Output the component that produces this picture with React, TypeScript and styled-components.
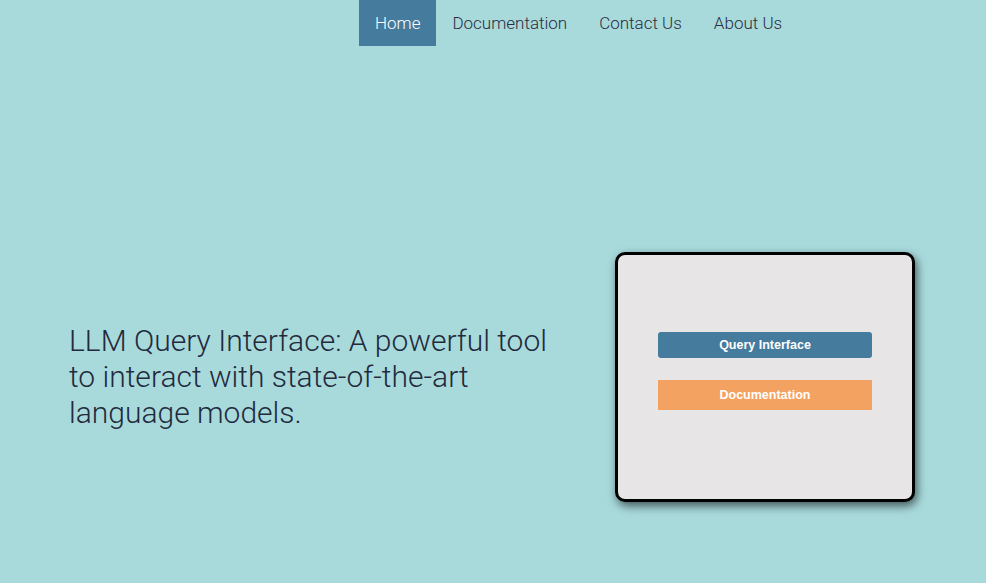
import React from "react";
import styled, { createGlobalStyle } from "styled-components";

const Global = createGlobalStyle`
  html, body { margin: 0; padding: 0; }
  body {
    background: #a8dadc;
    font-family: Roboto, "Liberation Sans", sans-serif;
    font-weight: 300;
    color: #2b2d42;
  }
`;

const Page = styled.div`
  min-height: 583px;
  display: flex;
  flex-direction: column;
`;

const Nav = styled.nav`
  display: flex;
  height: 46px;
  padding-left: 359px;
`;

const NavLink = styled.a<{ $active?: boolean }>`
  display: flex;
  align-items: center;
  padding: 0 16px;
  font-size: 17px;
  font-weight: 300;
  text-decoration: none;
  color: ${(p) => (p.$active ? "#ffffff" : "#2b2d42")};
  background: ${(p) => (p.$active ? "#457b9d" : "transparent")};
`;

const Hero = styled.section`
  display: flex;
  align-items: center;
  justify-content: space-between;
  padding: 206px 71px 0 69px;
`;

const Headline = styled.h1`
  margin: 0;
  width: 490px;
  font-size: 30px;
  line-height: 36px;
  font-weight: 300;
  color: #232a3d;
`;

const Card = styled.div`
  width: 300px;
  height: 250px;
  box-sizing: border-box;
  border: 3px solid #000;
  border-radius: 10px;
  background: #e7e5e6;
  box-shadow: 2px 4px 10px rgba(0, 0, 0, 0.6);
  padding: 0 40px;
  display: flex;
  flex-direction: column;
  justify-content: center;
  gap: 22px;
`;

const Button = styled.a<{ $variant: "primary" | "secondary" }>`
  display: flex;
  align-items: center;
  justify-content: center;
  height: ${(p) => (p.$variant === "primary" ? "26px" : "30px")};
  border-radius: ${(p) => (p.$variant === "primary" ? "3px" : "0")};
  background: ${(p) => (p.$variant === "primary" ? "#457b9d" : "#f4a261")};
  color: #fff;
  font-family: "Liberation Sans", Arial, sans-serif;
  font-weight: 700;
  font-size: 12.5px;
  text-decoration: none;
  margin-bottom: ${(p) => (p.$variant === "secondary" ? "13px" : "0")};
`;

export default function App() {
  return (
    <Page>
      <Global />
      <Nav>
        <NavLink $active href="#">Home</NavLink>
        <NavLink href="#">Documentation</NavLink>
        <NavLink href="#">Contact Us</NavLink>
        <NavLink href="#">About Us</NavLink>
      </Nav>
      <Hero>
        <Headline>
          LLM Query Interface: A powerful tool to interact with state-of-the-art language models.
        </Headline>
        <Card>
          <Button $variant="primary" href="#">Query Interface</Button>
          <Button $variant="secondary" href="#">Documentation</Button>
        </Card>
      </Hero>
    </Page>
  );
}
